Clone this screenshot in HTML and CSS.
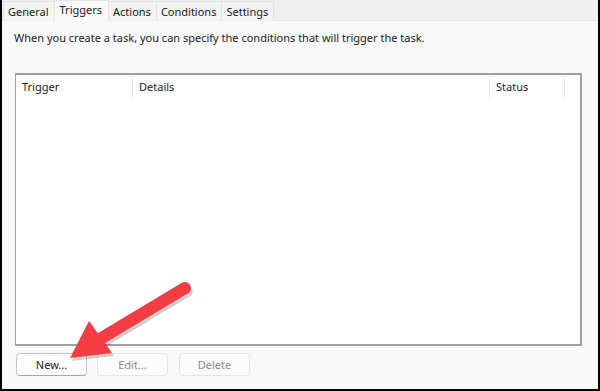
FILE: index.html
```html
<!DOCTYPE html>
<html lang="en">
<head>
    <meta charset="UTF-8">
    <title>Triggers</title>
    <link rel="stylesheet" href="styles.css">
</head>
<body>
    <div class="window">
        <div class="tabs">
            <div class="tab">General</div>
            <div class="tab active">Triggers</div>
            <div class="tab">Actions</div>
            <div class="tab">Conditions</div>
            <div class="tab">Settings</div>
        </div>
        <div class="page">
            <p class="intro">When you create a task, you can specify the conditions that will trigger the task.</p>
            <div class="list">
                <div class="list-head">
                    <div class="col col-trigger">Trigger</div>
                    <div class="col col-details">Details</div>
                    <div class="col col-status">Status</div>
                </div>
            </div>
            <div class="buttons">
                <button class="btn default">New...</button>
                <button class="btn" disabled>Edit...</button>
                <button class="btn" disabled>Delete</button>
            </div>
        </div>

        <!-- callout arrow pointing at the New button -->
        <svg class="arrow" width="600" height="391" viewBox="0 0 600 391">
            <g transform="translate(2,3)" fill="rgba(0,0,0,0.18)" stroke="rgba(0,0,0,0.18)">
                <line x1="185" y1="288" x2="100" y2="339" stroke-width="12" stroke-linecap="round"/>
                <polygon points="89,321 112,353 70,358" stroke="none"/>
            </g>
            <line x1="185" y1="288" x2="100" y2="339" stroke="#f33d43" stroke-width="12" stroke-linecap="round"/>
            <polygon points="89,321 112,353 70,358" fill="#f33d43"/>
        </svg>
    </div>
</body>
</html>
```

FILE: styles.css
```css
* {
    margin: 0;
    padding: 0;
    box-sizing: border-box;
}

body {
    background: #f9f9f9;
    font-family: "Noto Sans", "Open Sans", sans-serif;
    font-size: 11px;
    color: #1a1a1a;
    overflow: hidden;
}

.window {
    position: relative;
    width: 600px;
    height: 391px;
    border: 2px solid #000;
    border-top: none;
    background: #f9f9f9;
    display: flex;
    flex-direction: column;
}

.tabs {
    display: flex;
    height: 21px;
    padding-left: 1px;
    background: #f0f0f0;
    border-bottom: 1px solid #e6e6e6;
}

.tab {
    display: flex;
    align-items: center;
    padding: 0 5px 0 4px;
    height: 20px;
    margin-top: 1px;
    background: #f3f3f3;
    border: 1px solid #e3e3e3;
    border-bottom: none;
    margin-right: -1px;
}

.tab.active {
    height: 21px;
    margin-top: 0;
    background: #f9f9f9;
    padding: 1px 6px 0 5px;
    position: relative;
    z-index: 1;
    margin-bottom: -1px;
    align-items: flex-start;
}

.page {
    flex: 1;
    display: flex;
    flex-direction: column;
    padding: 9px 13px 12px 12px;
}

.intro {
    height: 43px;
}

.list {
    height: 273px;
    margin-left: 1px;
    margin-right: 3px;
    background: #fff;
    border: 1px solid #a0a0a0;
    border-right: 2px solid #a0a0a0;
    border-bottom: 2px solid #a0a0a0;
    border-top: 2px solid #a0a0a0;
}

.list-head {
    display: flex;
    height: 24px;
}

.col {
    padding: 4px 0 0 6px;
    border-right: 1px solid #ebebeb;
}

.col-trigger {
    width: 117px;
}

.col-details {
    width: 357px;
}

.col-status {
    width: 75px;
}

.buttons {
    display: flex;
    gap: 10px;
    margin-top: 7px;
    padding-left: 2px;
}

.btn {
    width: 71px;
    height: 23px;
    font-family: inherit;
    font-size: 11px;
    color: #1a1a1a;
    background: #fdfdfd;
    border: 1px solid #dcdcdc;
    border-radius: 4px;
}

.btn.default {
    border-color: #c4c4c4;
    border-bottom-color: #a8a8a8;
}

.btn:disabled {
    color: #8a8a8a;
    background: #fbfbfb;
    border-color: #e5e5e5;
}

.btn:disabled:last-child {
    margin-left: 1px;
}

.arrow {
    position: absolute;
    left: -2px;
    top: 0;
    pointer-events: none;
}
```
